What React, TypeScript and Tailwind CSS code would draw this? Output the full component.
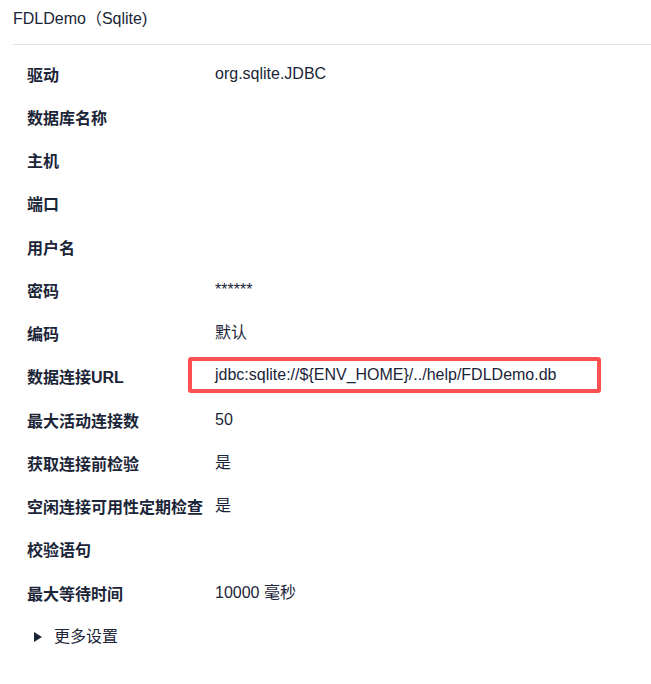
const rows: { label: string; value?: string; highlight?: boolean }[] = [
  { label: '驱动', value: 'org.sqlite.JDBC' },
  { label: '数据库名称' },
  { label: '主机' },
  { label: '端口' },
  { label: '用户名' },
  { label: '密码', value: '******' },
  { label: '编码', value: '默认' },
  { label: '数据连接URL', value: 'jdbc:sqlite://${ENV_HOME}/../help/FDLDemo.db', highlight: true },
  { label: '最大活动连接数', value: '50' },
  { label: '获取连接前检验', value: '是' },
  { label: '空闲连接可用性定期检查', value: '是' },
  { label: '校验语句' },
  { label: '最大等待时间', value: '10000 毫秒' },
];

export default function App() {
  return (
    <div
      className="h-[684px] w-[651px] bg-white text-[16px] text-[#1b2538]"
      style={{ fontFamily: '"Liberation Sans", "Noto Sans CJK SC", sans-serif' }}
    >
      <div className="ml-[13px] flex h-[45px] items-start border-b border-[#e2e4e8] pt-[7px]">
        FDLDemo（Sqlite)
      </div>
      <div className="pt-[9px]">
        {rows.map((r) => (
          <div key={r.label} className="flex h-[43.25px] items-center">
            <div className="w-[188px] shrink-0 pl-[27px] font-bold whitespace-nowrap">{r.label}</div>
            {r.highlight ? (
              <div className="-mt-[6px] flex h-[36px] w-[413px] items-center rounded-[3px] border-4 border-[#fd5151] pl-[23px]">
                {r.value}
              </div>
            ) : (
              <div className="pb-[4px] pl-[27px]">{r.value}</div>
            )}
          </div>
        ))}
      </div>
      <div className="mt-[9px] flex items-center gap-[12px] pl-[34px]">
        <svg width="8" height="10" viewBox="0 0 8 10">
          <path d="M0 0 L8 5 L0 10 Z" fill="#1b2538" />
        </svg>
        <span>更多设置</span>
      </div>
    </div>
  );
}
